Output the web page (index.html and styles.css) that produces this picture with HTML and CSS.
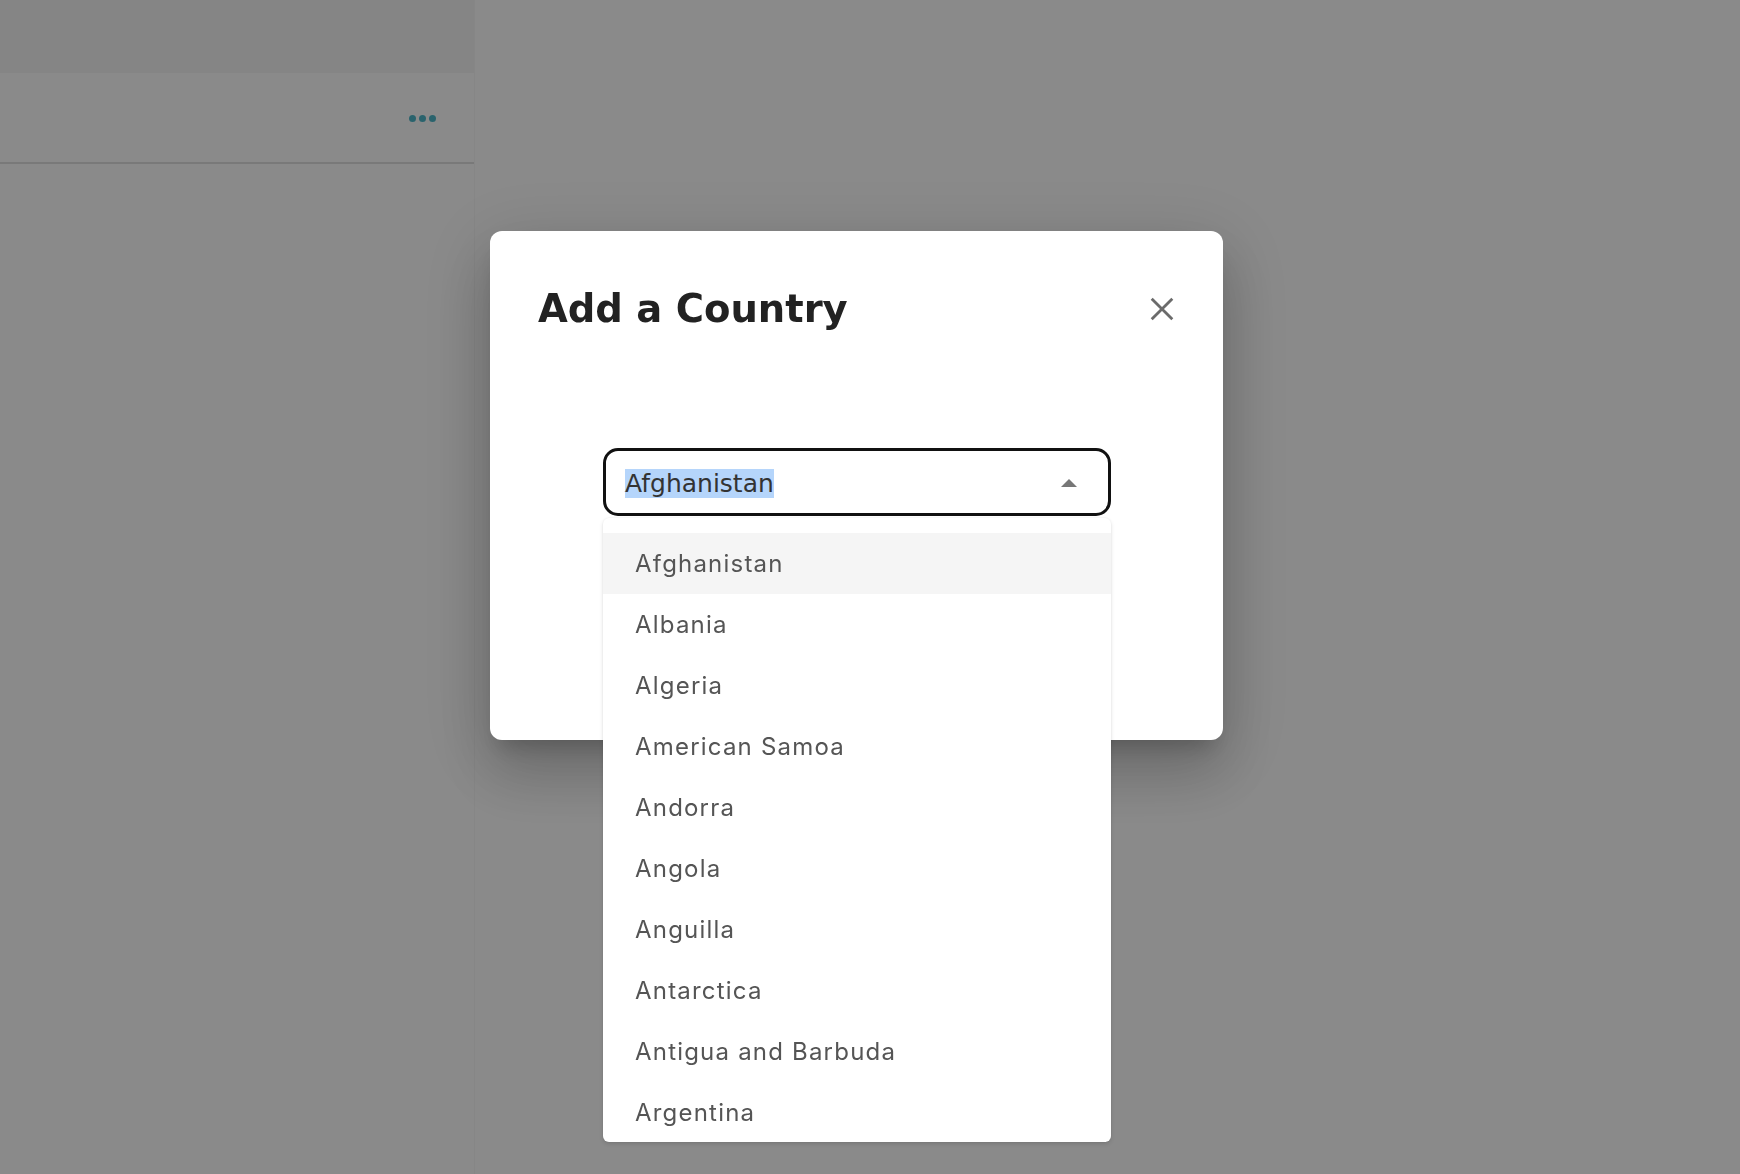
FILE: index.html
```html
<!DOCTYPE html>
<html lang="en">
<head>
<meta charset="utf-8">
<title>Add a Country</title>
<link rel="stylesheet" href="styles.css">
</head>
<body>
<div class="page">
  <aside class="sidebar">
    <div class="sidebar-head"></div>
    <div class="sidebar-row">
      <span class="more-dots"><i></i><i></i><i></i></span>
    </div>
  </aside>
</div>

<div class="overlay">
  <div class="modal" role="dialog">
    <div class="modal-head">
      <h2 class="modal-title">Add a Country</h2>
      <button class="close-btn" aria-label="Close">
        <svg viewBox="0 0 24 24" width="26" height="26"><path d="M2.5 2.5 L21.5 21.5 M21.5 2.5 L2.5 21.5" stroke="#6b6b6b" stroke-width="2.6" fill="none"/></svg>
      </button>
    </div>
    <div class="select">
      <span class="select-value"><span class="sel">Afghanistan</span></span>
      <span class="select-arrow"></span>
    </div>
    <ul class="options">
      <li class="option active">Afghanistan</li>
      <li class="option">Albania</li>
      <li class="option">Algeria</li>
      <li class="option">American Samoa</li>
      <li class="option">Andorra</li>
      <li class="option">Angola</li>
      <li class="option">Anguilla</li>
      <li class="option">Antarctica</li>
      <li class="option">Antigua and Barbuda</li>
      <li class="option">Argentina</li>
    </ul>
  </div>
</div>
</body>
</html>
```
FILE: styles.css
```css
html, body {
  margin: 0;
  padding: 0;
}
body {
  width: 1740px;
  height: 1174px;
  overflow: hidden;
  background: #ffffff;
  font-family: Inter, "Noto Sans", sans-serif;
}
.page {
  display: flex;
  height: 100%;
}
.sidebar {
  width: 474px;
  border-right: 1px solid #f7f7f7;
}
.sidebar-head {
  height: 73px;
  background: #f5f5f5;
}
.sidebar-row {
  height: 89px;
  border-bottom: 2px solid #e0e0e0;
  display: flex;
  align-items: center;
  justify-content: flex-end;
  padding-right: 38px;
}
.more-dots {
  display: flex;
  gap: 3px;
  margin-top: 2px;
}
.more-dots i {
  width: 7px;
  height: 7px;
  border-radius: 50%;
  background: #4fb8c9;
}

.overlay {
  position: fixed;
  inset: 0;
  background: rgba(0, 0, 0, 0.46);
}
.modal {
  position: absolute;
  left: 490px;
  top: 231px;
  width: 733px;
  height: 509px;
  box-sizing: border-box;
  padding: 0 48px;
  background: #ffffff;
  border-radius: 12px;
  box-shadow: 0 16px 22px -10px rgba(0,0,0,0.2), 0 36px 56px 4px rgba(0,0,0,0.14), 0 14px 68px 12px rgba(0,0,0,0.12);
}
.modal-head {
  display: flex;
  align-items: center;
  justify-content: space-between;
  height: 155px;
}
.modal-title {
  margin: 0;
  font-family: "DejaVu Sans", sans-serif;
  font-weight: 700;
  font-size: 38.5px;
  color: #222222;
  letter-spacing: 0;
}
.close-btn {
  border: 0;
  background: none;
  padding: 0;
  margin-right: 0;
  width: 26px;
  height: 26px;
  display: flex;
}
.select {
  position: absolute;
  left: 113px;
  top: 217px;
  width: 508px;
  height: 68px;
  box-sizing: border-box;
  border: 3px solid #111111;
  border-radius: 15px;
  display: flex;
  align-items: center;
  padding: 2px 31px 0 19px;
}
.select-value {
  flex: 1;
  font-family: "DejaVu Sans", sans-serif;
  font-size: 25px;
  color: #333333;
}
.sel {
  background: #b5d5fb;
}
.select-arrow {
  width: 0;
  height: 0;
  border-left: 8.5px solid transparent;
  border-right: 8.5px solid transparent;
  border-bottom: 8px solid #777777;
}
.options {
  position: absolute;
  left: 113px;
  top: 287px;
  width: 508px;
  height: 624px;
  margin: 0;
  padding: 15px 0 0;
  box-sizing: border-box;
  list-style: none;
  overflow: hidden;
  background: #ffffff;
  border-radius: 6px;
  box-shadow: 0 2px 4px rgba(0,0,0,0.12), 0 0 2px rgba(0,0,0,0.08);
}
.option {
  height: 61px;
  display: flex;
  align-items: center;
  padding-left: 32px;
  font-family: Inter, sans-serif;
  font-size: 24px;
  letter-spacing: 1.2px;
  color: #555555;
}
.option.active {
  background: #f5f5f5;
}
```
